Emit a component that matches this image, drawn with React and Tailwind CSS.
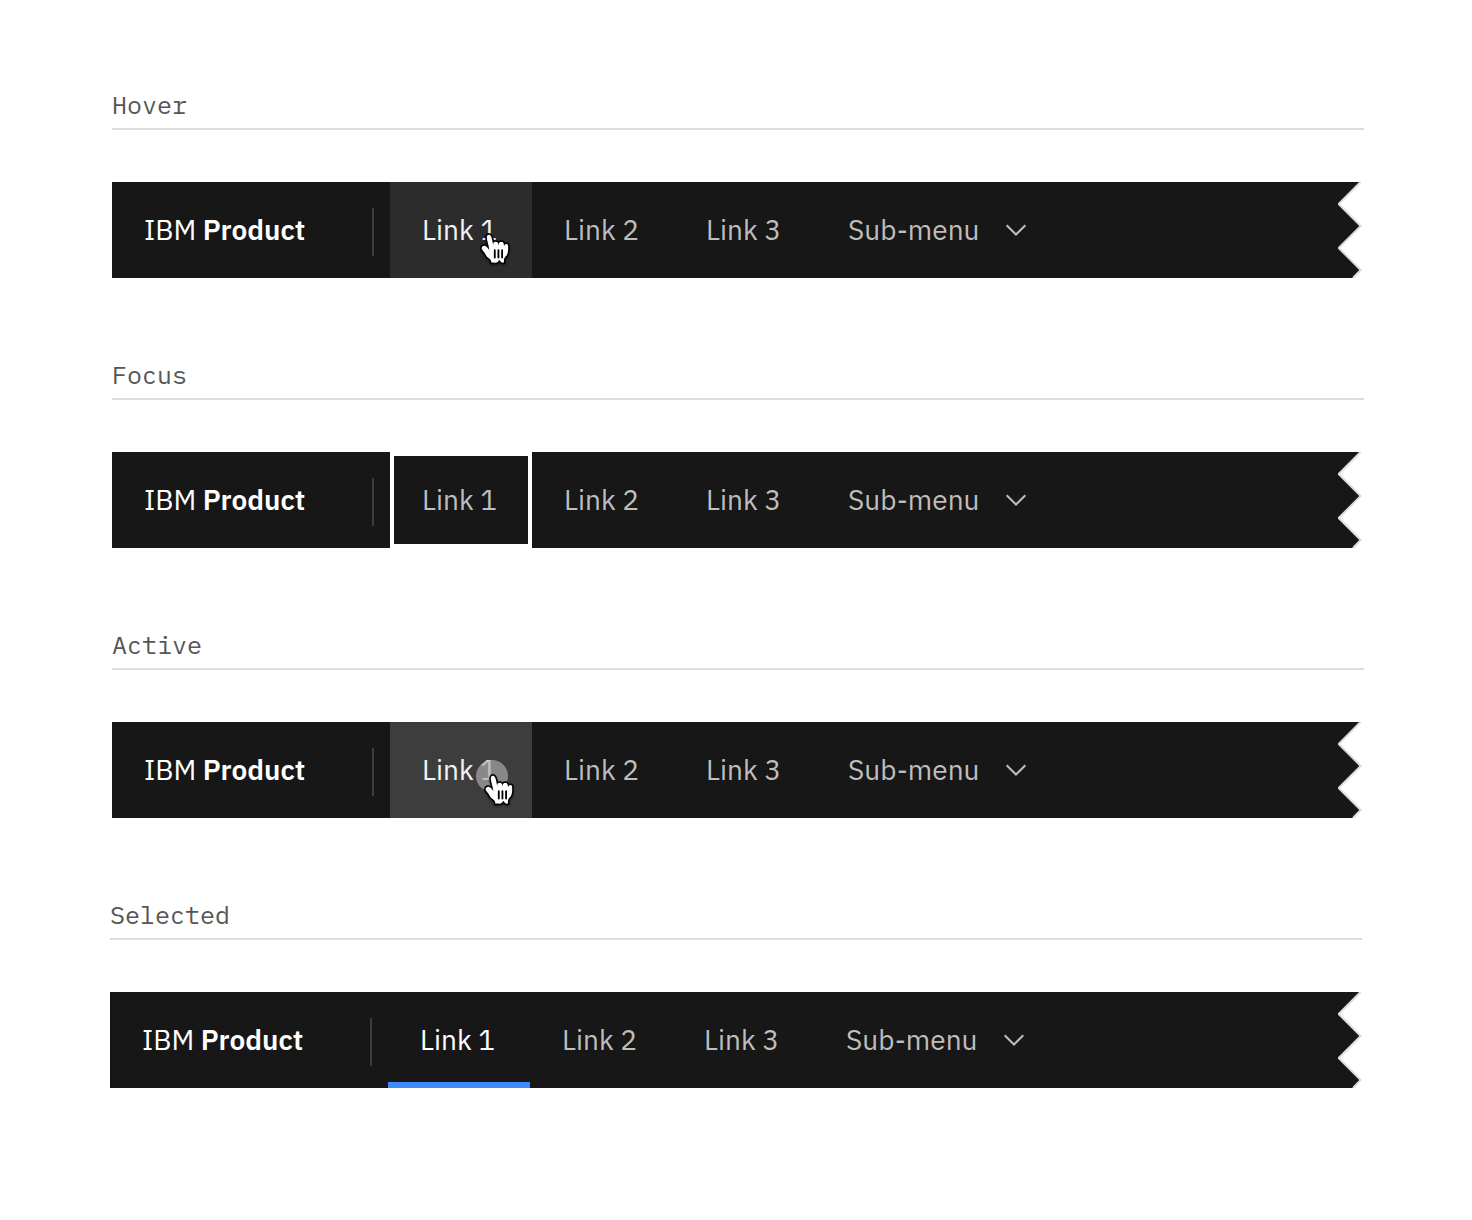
const HAND =
  "M11.3 20.4c-.3-.4-.6-1.1-1.2-2-.3-.5-1.2-1.5-1.5-1.9-.2-.4-.2-.6-.1-1 .1-.6.7-1.1 1.4-1.1.5 0 1 .4 1.4.7.2.2.5.6.7.8.2.2.2.3.4.5.2.3.3.5.2.1-.1-.5-.2-1.3-.4-2.1-.1-.6-.2-.7-.3-1.1-.1-.5-.2-.8-.3-1.3-.1-.3-.2-1.1-.3-1.5-.1-.5-.1-1.4.3-1.8.3-.3.9-.4 1.3-.2.5.3.8 1 .9 1.3.2.5.4 1.2.5 2 .2 1 .5 2.5.5 2.8 0-.4-.1-1.1 0-1.5.1-.3.3-.7.7-.8.3-.1.6-.1.9-.1.3.1.6.3.8.5.4.6.4 1.9.4 1.8.1-.4.1-1.2.3-1.6.1-.2.5-.4.7-.5.3-.1.7-.1 1 0 .2 0 .6.3.7.5.2.3.3 1.3.4 1.7 0 .1.1-.4.3-.7.4-.6 1.8-.8 1.9.6v1.1c0 .5 0 .8 0 1.2-.1.4-.2 1.3-.3 1.7-.1.3-.4 1-.7 1.4 0 0-1.1 1.2-1.2 1.8-.1.6-.1.6-.1 1s.1.9.1.9-.8.1-1.2 0c-.4-.1-.9-.8-1-1.1-.2-.3-.5-.3-.7 0-.2.4-.7 1.1-1.1 1.1-.7.1-2.1 0-3.1 0 0 0 .2-1-.2-1.4-.3-.3-.8-.8-1.1-1.1z";

function HandCursor() {
  return (
    <svg aria-hidden="true" viewBox="7 7 18 20" className="block h-[37px] w-[33px] drop-shadow-[0_1px_1px_rgba(0,0,0,0.4)]">
      <path d={HAND} fill="#fff" stroke="#000" strokeWidth="1.7" strokeLinejoin="round" />
      <path d={HAND} fill="#fff" />
      <path d="M15.6 16.800v4M17.600 16.800v4M19.600 16.800v4" stroke="#000" strokeWidth="1" strokeLinecap="round" />
    </svg>
  );
}

function TornEdge() {
  return (
    <svg aria-hidden="true" viewBox="0 0 24 96" className="block h-24 w-6 shrink-0">
      <path d="M0 0H22.500L0 22L23 44L0 66L23 88L15.500 96H0Z" fill="#171717" />
      <path d="M22.500 0L0.700 22L22.700 44L0.700 66L22.700 88L15 96" fill="none" stroke="#dcdcdc" strokeWidth="2" />
    </svg>
  );
}

const linkStates = {
  hover: "bg-[#2c2c2c] text-[#f3f3f3]",
  focus: "border-4 border-white text-[#bebebe]",
  active: "bg-[#3d3d3d] text-[#f3f3f3]",
  selected: "text-white shadow-[inset_0_-6px_0_#408bfc]",
};

function NavLink({ children, state }) {
  const pad = state === "focus" ? "px-7" : "px-8";
  const look = state ? linkStates[state] : "text-[#bebebe]";
  return (
    <a
      href="#"
      aria-current={state === "selected" ? "page" : undefined}
      className={`relative flex h-24 w-[142px] shrink-0 items-center whitespace-nowrap ${pad} ${look}`}
    >
      {children}
      {state === "active" && <span className="absolute top-[38px] left-[86px] size-8 rounded-full bg-[#a8a8a8]/70" />}
      {state === "hover" && (
        <span className="absolute top-[50px] left-[89px]">
          <HandCursor />
        </span>
      )}
      {state === "active" && (
        <span className="absolute top-[51px] left-[93px]">
          <HandCursor />
        </span>
      )}
    </a>
  );
}

function Example({ title, state }) {
  const selected = state === "selected";
  return (
    <section className={selected ? "px-[110px]" : "pr-[108px] pl-28"}>
      <h2 className="border-b-2 border-[#dcdcdc] pb-1.5 font-['IBM_Plex_Mono','Liberation_Mono',monospace] text-[25px] leading-[34px] font-normal text-[#565656]">
        {title}
      </h2>
      <header className={`mt-[52px] flex ${selected ? "" : "mr-[2px]"}`}>
        <div className="flex h-24 min-w-0 flex-1 items-center bg-[#171717]">
          <a href="#" className="w-[260px] shrink-0 pl-8 whitespace-nowrap text-white">
            IBM <span className="font-semibold">Product</span>
          </a>
          <span className="mt-1 mr-4 h-12 w-[2px] shrink-0 bg-[#3d3d3d]" />
          <nav aria-label={`${title} example`} className="flex">
            <NavLink state={state}>Link 1</NavLink>
            <NavLink>Link 2</NavLink>
            <NavLink>Link 3</NavLink>
            <button type="button" className="flex h-24 w-[212px] items-center justify-between pr-[2px] pl-8 whitespace-nowrap text-[#bebebe]">
              Sub-menu
              <svg aria-hidden="true" viewBox="0 0 20 12" className="h-3 w-5" fill="none" stroke="currentColor" strokeWidth="2">
                <path d="M0.700 1.200L10 10.500L19.300 1.200" />
              </svg>
            </button>
          </nav>
        </div>
        <TornEdge />
      </header>
    </section>
  );
}

export default function App() {
  return (
    <main className="flex min-h-screen flex-col gap-20 bg-white pt-[88px] pb-32 font-['IBM_Plex_Sans',Roboto,sans-serif] text-[28px] leading-9">
      <Example title="Hover" state="hover" />
      <Example title="Focus" state="focus" />
      <Example title="Active" state="active" />
      <Example title="Selected" state="selected" />
    </main>
  );
}
